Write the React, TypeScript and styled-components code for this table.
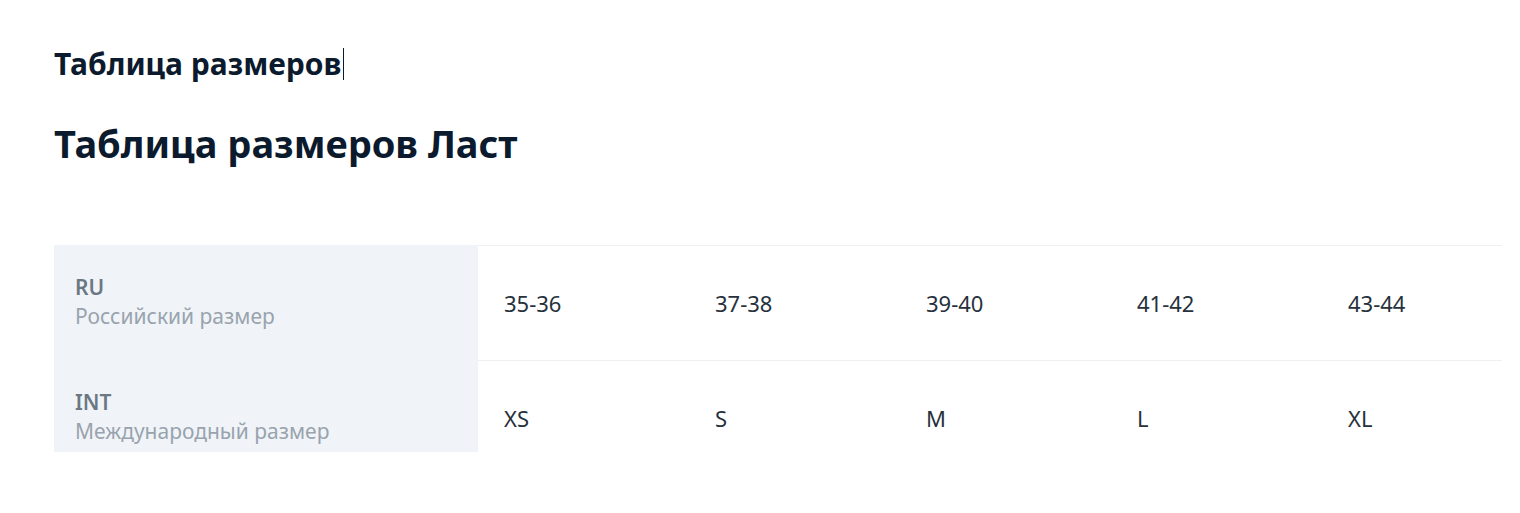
import React from "react";
import styled, { createGlobalStyle } from "styled-components";

interface SizeRow {
    code: string;
    title: string;
    values: string[];
}

const rows: SizeRow[] = [
    {
        code: "RU",
        title: "Российский размер",
        values: ["35-36", "37-38", "39-40", "41-42", "43-44"],
    },
    {
        code: "INT",
        title: "Международный размер",
        values: ["XS", "S", "M", "L", "XL"],
    },
];

const GlobalStyle = createGlobalStyle`
    body {
        margin: 0;
        background: #ffffff;
        font-family: "Noto Sans", "Open Sans", sans-serif;
    }
`;

export default function App() {
    return (
        <>
            <GlobalStyle />
            <Page>
                <PageTitle>
                    Таблица размеров
                    <Caret />
                </PageTitle>
                <TableTitle>Таблица размеров Ласт</TableTitle>
                <SizeTable>
                    {rows.map((row, i) => (
                        <React.Fragment key={row.code}>
                            <LabelCell $last={i === rows.length - 1}>
                                <Code>{row.code}</Code>
                                <Caption>{row.title}</Caption>
                            </LabelCell>
                            {row.values.map((v) => (
                                <ValueCell key={v}>{v}</ValueCell>
                            ))}
                        </React.Fragment>
                    ))}
                </SizeTable>
            </Page>
        </>
    );
}

const Page = styled.div`
    padding: 43px 0 0 54px;
`;

const PageTitle = styled.h1`
    display: flex;
    align-items: center;
    margin: 0;
    font-size: 30px;
    font-weight: 700;
    line-height: 42px;
    color: #0b1a2c;
`;

const Caret = styled.span`
    display: inline-block;
    width: 1px;
    height: 32px;
    margin-left: 2px;
    background: #0b1a2c;
`;

const TableTitle = styled.h2`
    margin: 32px 0 0;
    font-size: 38px;
    font-weight: 700;
    line-height: 52px;
    color: #0b1a2c;
`;

const SizeTable = styled.div`
    display: grid;
    grid-template-columns: 424px repeat(4, 211px) 180px;
    grid-auto-rows: 115px;
    margin-top: 76px;
`;

const LabelCell = styled.div<{ $last?: boolean }>`
    display: flex;
    flex-direction: column;
    align-self: start;
    box-sizing: border-box;
    height: ${(p) => (p.$last ? "92px" : "115px")};
    padding: 28px 21px 0;
    background: #f0f4f8;
`;

const Code = styled.span`
    font-size: 21px;
    font-weight: 600;
    line-height: 28px;
    color: #6b7883;
`;

const Caption = styled.span`
    font-size: 21px;
    line-height: 30px;
    color: #99a3ad;
`;

const ValueCell = styled.div`
    display: flex;
    align-items: center;
    padding-left: 26px;
    border-top: 1px solid #eef1f4;
    font-size: 22px;
    color: #26313c;
`;
